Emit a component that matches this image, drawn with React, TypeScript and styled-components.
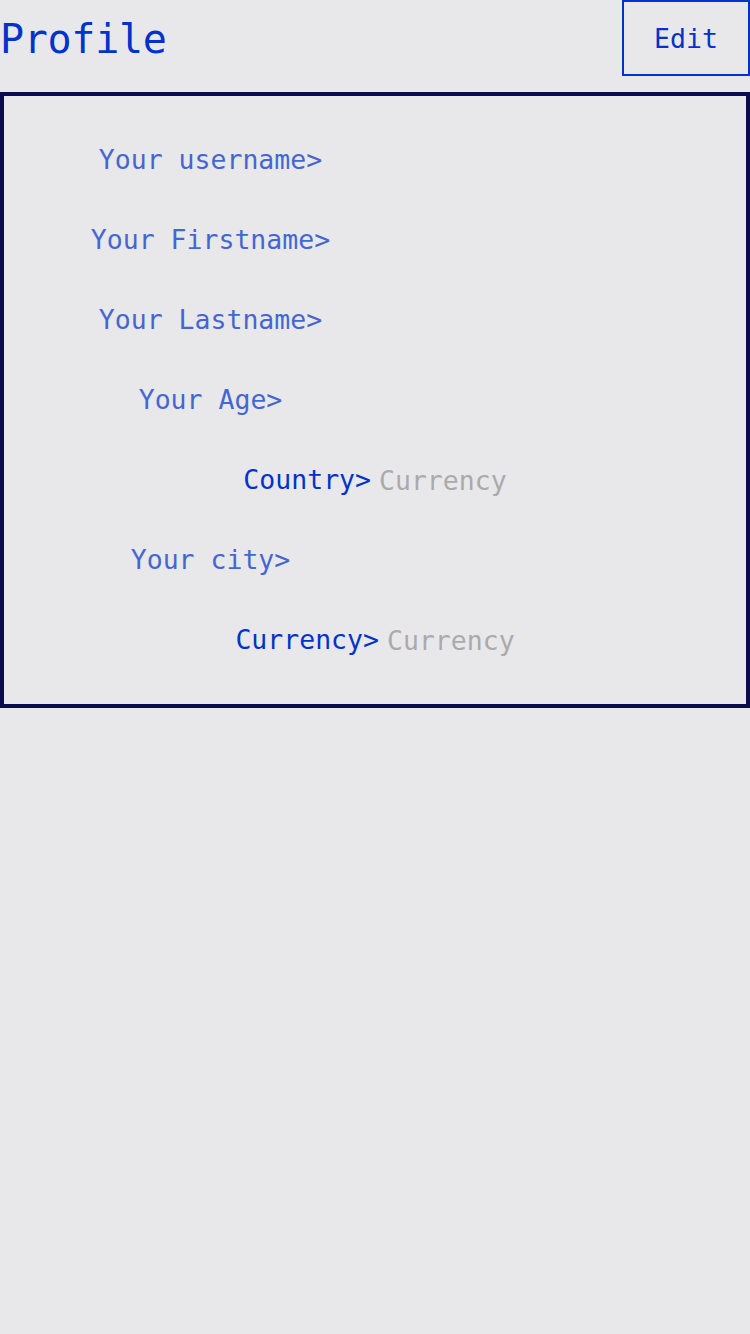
import styled, { createGlobalStyle } from 'styled-components'

const GlobalStyle = createGlobalStyle`
    html, body {
        margin: 0;
        padding: 0;
        background-color: #e8e8ea;
        font-family: 'DejaVu Sans Mono', 'Liberation Mono', monospace;
    }
`

type Field = {
    label: string
    placeholder?: string
}

const fields: Field[] = [
    { label: 'Your username>' },
    { label: 'Your Firstname>' },
    { label: 'Your Lastname>' },
    { label: 'Your Age>' },
    { label: 'Country>', placeholder: 'Currency' },
    { label: 'Your city>' },
    { label: 'Currency>', placeholder: 'Currency' },
]

export default function App() {
    return (
        <Page>
            <GlobalStyle />
            <Header>
                <Title>Profile</Title>
                <EditButton>Edit</EditButton>
            </Header>
            <Card>
                {fields.map((f) => (
                    <Row key={f.label}>
                        <Label $strong={!!f.placeholder}>{f.label}</Label>
                        <Input $chars={f.placeholder?.length} placeholder={f.placeholder} />
                    </Row>
                ))}
            </Card>
        </Page>
    )
}

const Page = styled.div`
    width: 750px;
    min-height: 1334px;
    background-color: #e8e8ea;
`

const Header = styled.div`
    display: flex;
    justify-content: space-between;
    align-items: flex-start;
    height: 76px;
    margin-bottom: 16px;
`

const Title = styled.h1`
    margin: 0;
    padding-top: 12px;
    font-size: 40px;
    font-weight: normal;
    line-height: 54px;
    color: #0033cc;
    letter-spacing: -0.3px;
`

const EditButton = styled.button`
    box-sizing: border-box;
    width: 128px;
    height: 76px;
    border: 2px solid #0033cc;
    background: transparent;
    color: #0033cc;
    font-family: inherit;
    font-size: 26.5px;
    padding: 0;
`

const Card = styled.div`
    box-sizing: border-box;
    width: 750px;
    height: 616px;
    border: 4px solid #0a0a4e;
    padding: 46px 0 0;
    display: flex;
    flex-direction: column;
    gap: 44px;
`

const Row = styled.div`
    display: flex;
    justify-content: center;
    align-items: center;
    gap: 8px;
    height: 36px;
`

const Label = styled.span<{ $strong: boolean }>`
    font-size: 26.5px;
    line-height: 36px;
    white-space: pre;
    color: ${(p) => (p.$strong ? '#0033cc' : '#4466d2')};
`

// empty inputs keep a fixed width, those with a placeholder fit its text
const Input = styled.input<{ $chars?: number }>`
    box-sizing: border-box;
    width: ${(p) => (p.$chars ? `${p.$chars}ch` : '321px')};
    height: 36px;
    padding: 0;
    border: none;
    outline: none;
    background: transparent;
    font-family: inherit;
    font-size: 26.5px;
    color: #0033cc;
    &::placeholder {
        color: #aaaaaa;
    }
`
